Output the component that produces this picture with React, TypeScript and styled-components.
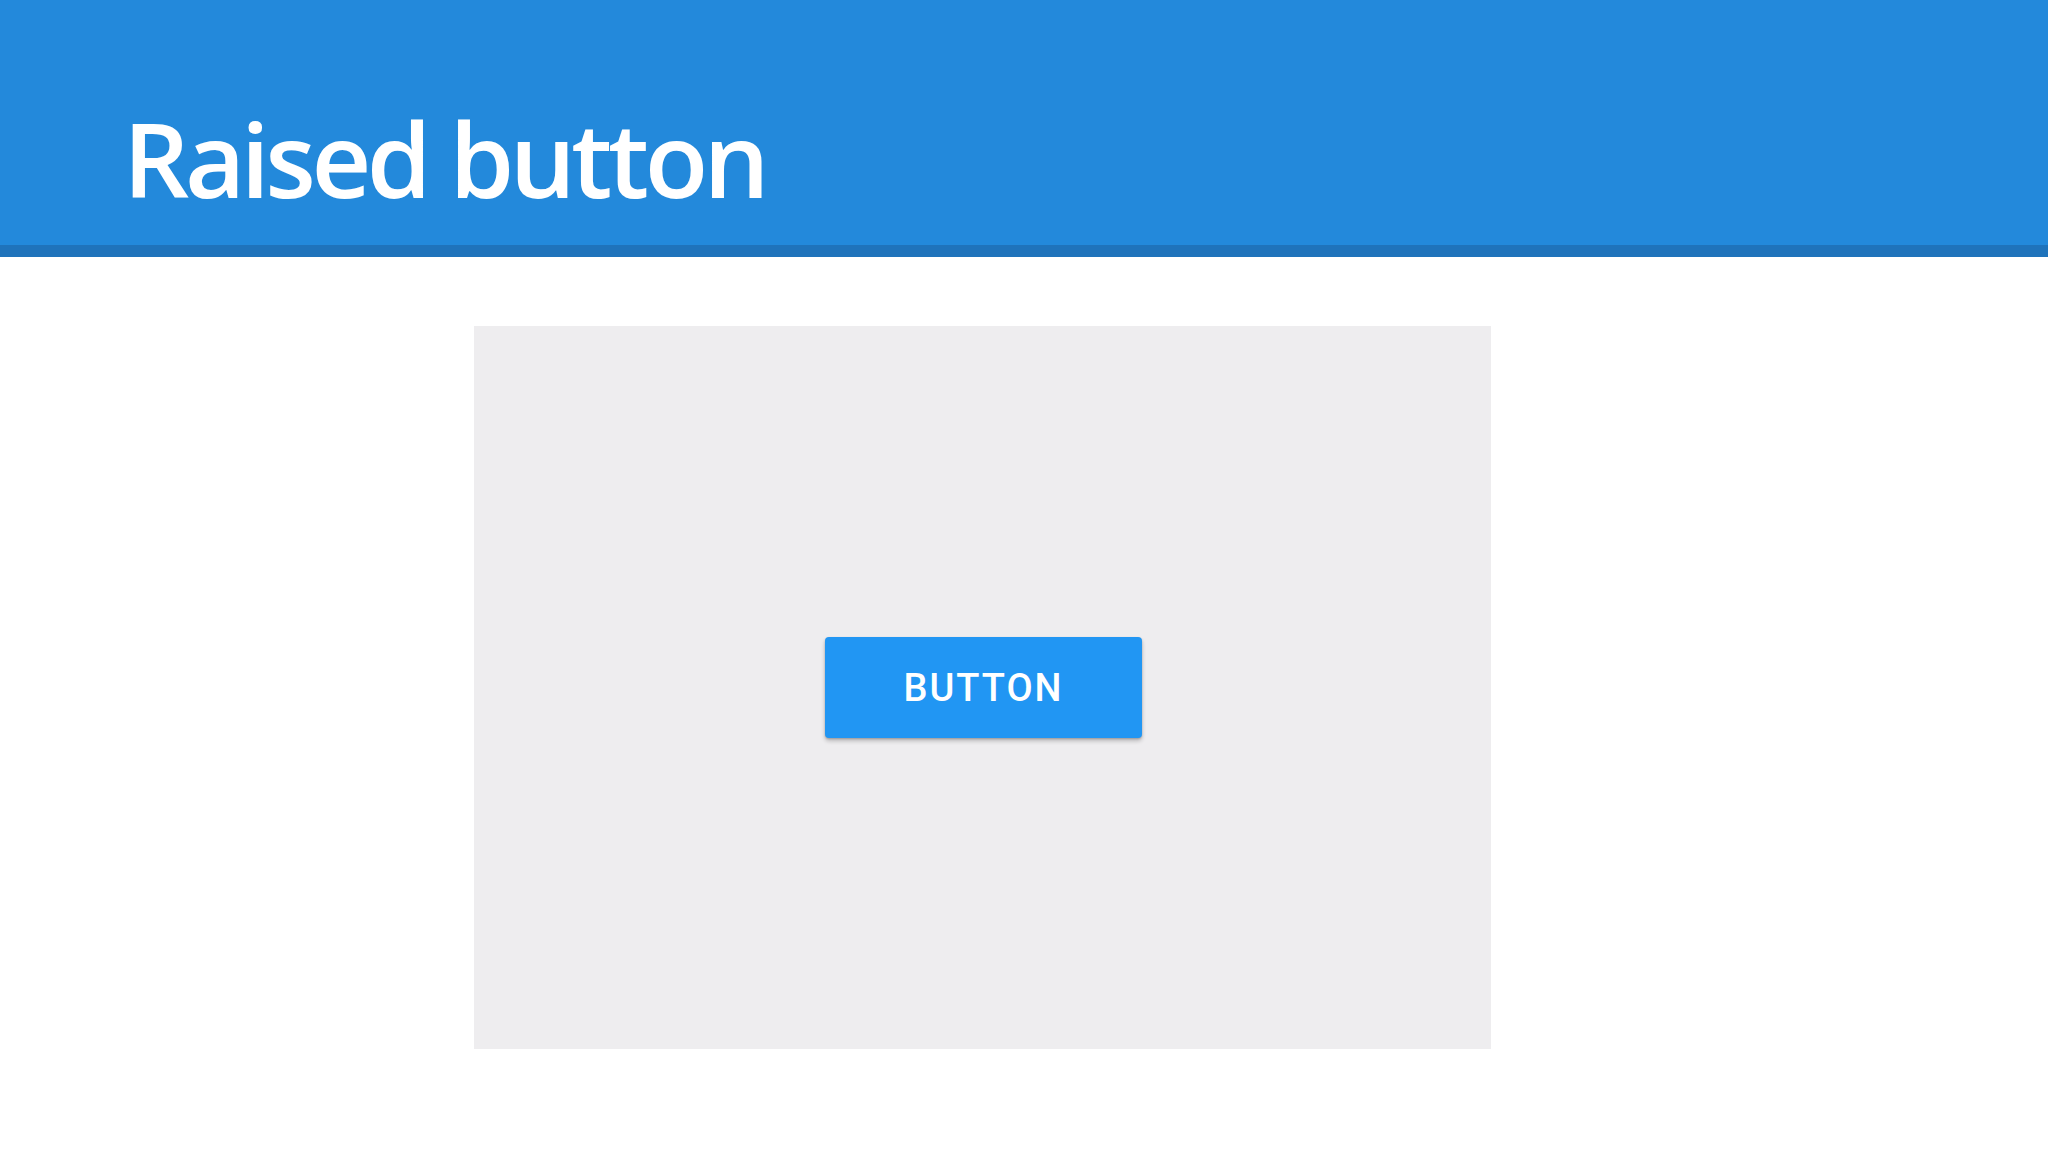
import React from "react";
import styled, { createGlobalStyle } from "styled-components";

const Global = createGlobalStyle`
  html, body { margin: 0; padding: 0; background: #ffffff; }
  body { width: 2048px; height: 1152px; overflow: hidden; }
`;

const Page = styled.div`
  width: 2048px;
  height: 1152px;
  background: #ffffff;
  display: flex;
  flex-direction: column;
`;

const Header = styled.header`
  height: 245px;
  background: #2389db;
  border-bottom: 12px solid #1f73bb;
  box-sizing: content-box;
  display: flex;
  align-items: flex-end;
  padding-left: 123px;
`;

const Title = styled.h1`
  margin: 0 0 35px 0;
  font-family: "Open Sans", "Noto Sans", sans-serif;
  font-weight: 600;
  font-size: 104px;
  line-height: 1;
  letter-spacing: -4.5px;
  color: #ffffff;
`;

const Content = styled.main`
  padding: 69px 0 0 474px;
  display: flex;
`;

const Stage = styled.section`
  width: 1017px;
  height: 723px;
  background: #eeedef;
  display: flex;
  align-items: center;
  justify-content: center;
`;

const RaisedButton = styled.button`
  width: 317px;
  height: 101px;
  border: none;
  border-radius: 4px;
  background: #2196f3;
  color: #ffffff;
  font-family: Roboto, "Liberation Sans", sans-serif;
  font-weight: 500;
  font-size: 38px;
  letter-spacing: 2px;
  text-transform: uppercase;
  box-shadow: 0 3px 4px rgba(0, 0, 0, 0.22), 0 1px 2px rgba(0, 0, 0, 0.18);
  padding: 0;
  margin-left: 2px;
  cursor: pointer;
`;

export default function App() {
  return (
    <Page>
      <Global />
      <Header>
        <Title>Raised button</Title>
      </Header>
      <Content>
        <Stage>
          <RaisedButton>Button</RaisedButton>
        </Stage>
      </Content>
    </Page>
  );
}
